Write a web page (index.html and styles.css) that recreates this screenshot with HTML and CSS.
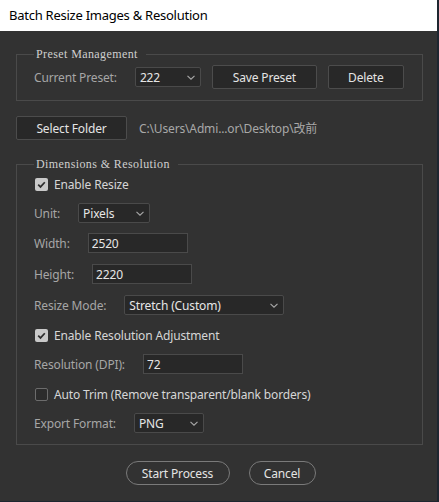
FILE: index.html
```html
<!DOCTYPE html>
<html lang="en">
<head>
<meta charset="utf-8">
<title>Batch Resize Images &amp; Resolution</title>
<link rel="stylesheet" href="styles.css">
</head>
<body>
<div class="window">
  <header class="titlebar">Batch Resize Images &amp; Resolution</header>
  <main class="dialog">
    <fieldset class="group group-preset">
      <legend>Preset Management</legend>
      <div class="preset-row">
        <span class="label">Current Preset:</span>
        <div class="select select-preset"><span class="value">222</span><svg class="chev" viewBox="0 0 8 5" width="8" height="5"><path d="M0.5 0.8 L4 4.2 L7.5 0.8"/></svg></div>
        <button class="btn btn-save">Save Preset</button>
        <button class="btn btn-delete">Delete</button>
      </div>
    </fieldset>

    <div class="folder-row">
      <button class="btn btn-folder">Select Folder</button>
      <span class="path">C:\Users\Admi...or\Desktop\改前</span>
    </div>

    <fieldset class="group group-dims">
      <legend>Dimensions &amp; Resolution</legend>
      <div class="rows">
        <label class="check">
          <span class="box box-on"><svg viewBox="0 0 13 13" width="13" height="13"><path d="M3.2 6.6 L5.5 8.9 L9.8 4.2"/></svg></span>
          <span class="check-text">Enable Resize</span>
        </label>
        <div class="field field-tight">
          <span class="label">Unit:</span>
          <div class="select select-unit"><span class="value">Pixels</span><svg class="chev" viewBox="0 0 8 5" width="8" height="5"><path d="M0.5 0.8 L4 4.2 L7.5 0.8"/></svg></div>
        </div>
        <div class="field">
          <span class="label">Width:</span>
          <input class="input" type="text" value="2520">
        </div>
        <div class="field field-loose">
          <span class="label">Height:</span>
          <input class="input" type="text" value="2220">
        </div>
        <div class="field field-loose">
          <span class="label">Resize Mode:</span>
          <div class="select select-mode"><span class="value">Stretch (Custom)</span><svg class="chev" viewBox="0 0 8 5" width="8" height="5"><path d="M0.5 0.8 L4 4.2 L7.5 0.8"/></svg></div>
        </div>
        <label class="check">
          <span class="box box-on"><svg viewBox="0 0 13 13" width="13" height="13"><path d="M3.2 6.6 L5.5 8.9 L9.8 4.2"/></svg></span>
          <span class="check-text">Enable Resolution Adjustment</span>
        </label>
        <div class="field field-tight">
          <span class="label">Resolution (DPI):</span>
          <input class="input" type="text" value="72">
        </div>
        <label class="check">
          <span class="box"></span>
          <span class="check-text">Auto Trim (Remove transparent/blank borders)</span>
        </label>
        <div class="field field-tight">
          <span class="label">Export Format:</span>
          <div class="select select-format"><span class="value">PNG</span><svg class="chev" viewBox="0 0 8 5" width="8" height="5"><path d="M0.5 0.8 L4 4.2 L7.5 0.8"/></svg></div>
        </div>
      </div>
    </fieldset>

    <div class="actions">
      <button class="pill pill-start">Start Process</button>
      <button class="pill pill-cancel">Cancel</button>
    </div>
  </main>
</div>
</body>
</html>
```

FILE: styles.css
```css
* {
  box-sizing: border-box;
}

html, body {
  margin: 0;
  padding: 0;
  background: #1e2630;
}

body {
  font-family: "Noto Sans", "Noto Sans CJK SC", sans-serif;
  font-size: 12px;
  letter-spacing: -0.15px;
  color: #a6a6a6;
}

.window {
  width: 437px;
  height: 501px;
  background: #323232;
  display: flex;
  flex-direction: column;
}

/* Title bar */
.titlebar {
  height: 31px;
  flex: none;
  background: #ffffff;
  color: #000000;
  font-size: 13px;
  letter-spacing: -0.25px;
  line-height: 31px;
  padding-left: 9px;
}

.dialog {
  padding: 17px 14px 0 16px;
}

/* Group boxes */
.group {
  margin: 0;
  min-width: 0;
  border: 1px solid #4a4a4a;
  padding: 5px 16px 11px 17px;
}

.group legend {
  font-family: "Liberation Serif", serif;
  font-size: 12px;
  letter-spacing: 0.4px;
  line-height: 12px;
  color: #cfcfcf;
  padding: 0 8px 0 2px;
}

.preset-row {
  display: flex;
  align-items: center;
  gap: 11px;
  height: 24px;
}

.preset-row .label {
  margin-right: 7px;
}

/* Buttons */
.btn {
  font: inherit;
  letter-spacing: inherit;
  height: 24px;
  padding: 0;
  background: #282828;
  border: 1px solid #4c4c4c;
  border-radius: 2px;
  color: #e4e4e4;
}

.btn-save {
  width: 105px;
}

.btn-delete {
  width: 76px;
}

.btn-folder {
  width: 111px;
}

/* Dropdowns */
.select {
  height: 20px;
  display: flex;
  align-items: center;
  justify-content: space-between;
  padding: 0 5px 0 4px;
  background: #282828;
  border: 1px solid #4a4a4a;
  border-radius: 2px;
  color: #e6e6e6;
}

.chev {
  flex: none;
}

.chev path {
  fill: none;
  stroke: #a8a8a8;
  stroke-width: 1.1;
}

.select-preset {
  width: 66px;
}

.select-unit {
  width: 72px;
}

.select-mode {
  width: 160px;
}

.select-format {
  width: 70px;
}

/* Folder row */
.folder-row {
  display: flex;
  align-items: center;
  gap: 12px;
  margin-top: 15px;
}

.path {
  color: #a8a8a8;
}

.group-dims {
  margin-top: 18px;
  padding-top: 4px;
}

.rows {
  display: flex;
  flex-direction: column;
  gap: 10px;
}

.field {
  display: flex;
  align-items: center;
  gap: 18px;
  height: 20px;
}

.field-tight {
  margin-top: -1px;
}

.field-loose {
  margin-top: 1px;
}

.input {
  width: 100px;
  height: 20px;
  margin: 0;
  padding: 0 3px;
  font: inherit;
  letter-spacing: inherit;
  color: #e6e6e6;
  background: #282828;
  border: 1px solid #4a4a4a;
  border-radius: 0;
  outline: none;
}

/* Checkboxes */
.check {
  display: flex;
  align-items: center;
  gap: 6px;
  height: 20px;
  padding-left: 1px;
  color: #d6d6d6;
}

.box {
  width: 13px;
  height: 13px;
  flex: none;
  border-radius: 2px;
  border: 1px solid #6c6c6c;
  background: #2c2c2c;
  display: block;
}

.box-on {
  border: none;
  background: #c9c9c9;
}

.box svg {
  display: block;
}

.box svg path {
  fill: none;
  stroke: #2e2e2e;
  stroke-width: 1.7;
}

/* Bottom action buttons */
.actions {
  display: flex;
  justify-content: center;
  gap: 19px;
  margin-top: 16px;
  padding-left: 2px;
}

.pill {
  font: inherit;
  letter-spacing: inherit;
  height: 24px;
  padding: 0;
  background: transparent;
  border: 1px solid #7a7a7a;
  border-radius: 12px;
  color: #e4e4e4;
}

.pill-start {
  width: 104px;
}

.pill-cancel {
  width: 67px;
}
```
